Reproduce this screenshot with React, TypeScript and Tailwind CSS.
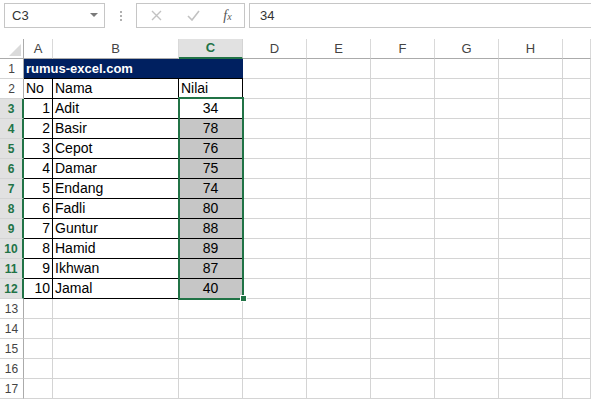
import React from 'react';

// data tabel nilai
const data = [
  { no: 1, nama: 'Adit', nilai: 34 },
  { no: 2, nama: 'Basir', nilai: 78 },
  { no: 3, nama: 'Cepot', nilai: 76 },
  { no: 4, nama: 'Damar', nilai: 75 },
  { no: 5, nama: 'Endang', nilai: 74 },
  { no: 6, nama: 'Fadli', nilai: 80 },
  { no: 7, nama: 'Guntur', nilai: 88 },
  { no: 8, nama: 'Hamid', nilai: 89 },
  { no: 9, nama: 'Ikhwan', nilai: 87 },
  { no: 10, nama: 'Jamal', nilai: 40 },
];

const cols = ['A', 'B', 'C', 'D', 'E', 'F', 'G', 'H', ''];
const font = { fontFamily: '"Liberation Sans", Arial, sans-serif' };

function RowHead({ n, selected }: { n: number; selected?: boolean }) {
  return (
    <div
      className={
        selected
          ? 'flex items-center justify-center bg-[#e1e1e1] border-b border-b-[#d4d4d4] border-r-2 border-r-[#217346] text-[#217346] font-bold text-[12px]'
          : 'flex items-center justify-center bg-white border-b border-b-[#d4d4d4] border-r border-r-[#ababab] text-[#444] text-[12px]'
      }
    >
      {n}
    </div>
  );
}

function EmptyCells({ from }: { from: number }) {
  // sel kosong dengan garis grid
  return (
    <>
      {cols.slice(from).map((c, i) => (
        <div key={i} className="border-r border-b border-[#d4d4d4]" />
      ))}
    </>
  );
}

export default function App() {
  return (
    <div className="w-[591px] h-[399px] overflow-hidden bg-white" style={font}>
      {/* toolbar: name box + formula bar */}
      <div className="h-[39px] flex items-start pt-[3px]">
        <div className="ml-[4px] w-[101px] h-[25px] border border-[#c6c6c6] flex items-center pl-[7px] pr-[6px] text-[13px] text-[#333]">
          <span className="flex-1">C3</span>
          <svg width="8" height="5" viewBox="0 0 8 5">
            <polygon points="0,0 8,0 4,4" fill="#7a7a7a" />
          </svg>
        </div>
        <div className="w-[31px] h-[25px] flex flex-col items-center justify-center gap-[2px]">
          <div className="w-[2px] h-[2px] bg-[#b0b0b0]" />
          <div className="w-[2px] h-[2px] bg-[#b0b0b0]" />
          <div className="w-[2px] h-[2px] bg-[#b0b0b0]" />
        </div>
        <div className="w-[109px] h-[25px] border border-[#c6c6c6] flex items-center">
          <div className="w-[38px] flex justify-center">
            <svg width="11" height="11" viewBox="0 0 11 11">
              <path d="M1 1 L10 10 M10 1 L1 10" stroke="#c2c2c2" strokeWidth="1.4" />
            </svg>
          </div>
          <div className="w-[36px] flex justify-center">
            <svg width="13" height="11" viewBox="0 0 13 11">
              <path d="M1 6 L5 10 L12 1" stroke="#c2c2c2" strokeWidth="1.6" fill="none" />
            </svg>
          </div>
          <div
            className="flex-1 flex justify-center text-[14px] italic text-[#555] leading-none"
            style={{ fontFamily: '"Liberation Serif", "Times New Roman", serif' }}
          >
            f<span className="text-[10px] mt-[3px]">x</span>
          </div>
        </div>
        <div className="ml-[4px] flex-1 h-[25px] border border-[#c6c6c6] border-r-0 flex items-center pl-[10px] text-[13px] text-[#333]">
          34
        </div>
      </div>

      {/* lembar kerja */}
      <div className="relative grid grid-cols-[24px_29px_126px_64px_64px_64px_64px_64px_64px_28px] grid-rows-[repeat(18,20px)] text-[14px] text-black">
        {/* header kolom */}
        <div className="relative border-r border-b border-[#ababab] bg-white">
          <svg className="absolute right-[2px] bottom-[2px]" width="12" height="12" viewBox="0 0 12 12">
            <polygon points="12,0 12,12 0,12" fill="#dadada" />
          </svg>
        </div>
        {cols.map((c, i) =>
          c === 'C' ? (
            <div key={i} className="flex items-center justify-center bg-[#e1e1e1] border-r border-r-[#d4d4d4] border-b-2 border-b-[#217346] text-[#217346] font-bold text-[13px]">
              C
            </div>
          ) : (
            <div key={i} className="flex items-center justify-center bg-white border-r border-r-[#d9d9d9] border-b border-b-[#ababab] text-[#444] text-[13px]">
              {c}
            </div>
          )
        )}

        {/* baris 1 */}
        <RowHead n={1} />
        <div className="col-span-3 bg-[#002060] border-b border-black flex items-center px-[2px] text-white font-bold text-[13px]">
          rumus-excel.com
        </div>
        <EmptyCells from={3} />

        {/* baris 2 */}
        <RowHead n={2} />
        <div className="border-r border-b border-black flex items-center px-[2px]">No</div>
        <div className="border-r border-b border-black flex items-center px-[2px]">Nama</div>
        <div className="border-r border-b border-black flex items-center px-[2px]">Nilai</div>
        <EmptyCells from={3} />

        {/* baris 3-12 */}
        {data.map((d, i) => (
          <React.Fragment key={i}>
            <RowHead n={i + 3} selected />
            <div className="border-r border-b border-black flex items-center justify-end px-[2px]">{d.no}</div>
            <div className="border-r border-b border-black flex items-center px-[2px]">{d.nama}</div>
            <div
              className={
                i === 0
                  ? 'border-r border-b border-black flex items-center justify-center bg-white'
                  : 'border-r border-b border-black flex items-center justify-center bg-[#c6c6c6]'
              }
            >
              {d.nilai}
            </div>
            <EmptyCells from={3} />
          </React.Fragment>
        ))}

        {/* baris 13-17 */}
        {[13, 14, 15, 16, 17].map((n) => (
          <React.Fragment key={n}>
            <RowHead n={n} />
            <EmptyCells from={0} />
          </React.Fragment>
        ))}

        {/* seleksi C3:C12 */}
        <div className="absolute left-[178px] top-[58px] w-[66px] h-[203px] border-2 border-[#217346]">
          <div className="absolute right-[-5px] bottom-[-4px] w-[7px] h-[7px] bg-[#217346] border border-white" />
        </div>
      </div>
    </div>
  );
}
